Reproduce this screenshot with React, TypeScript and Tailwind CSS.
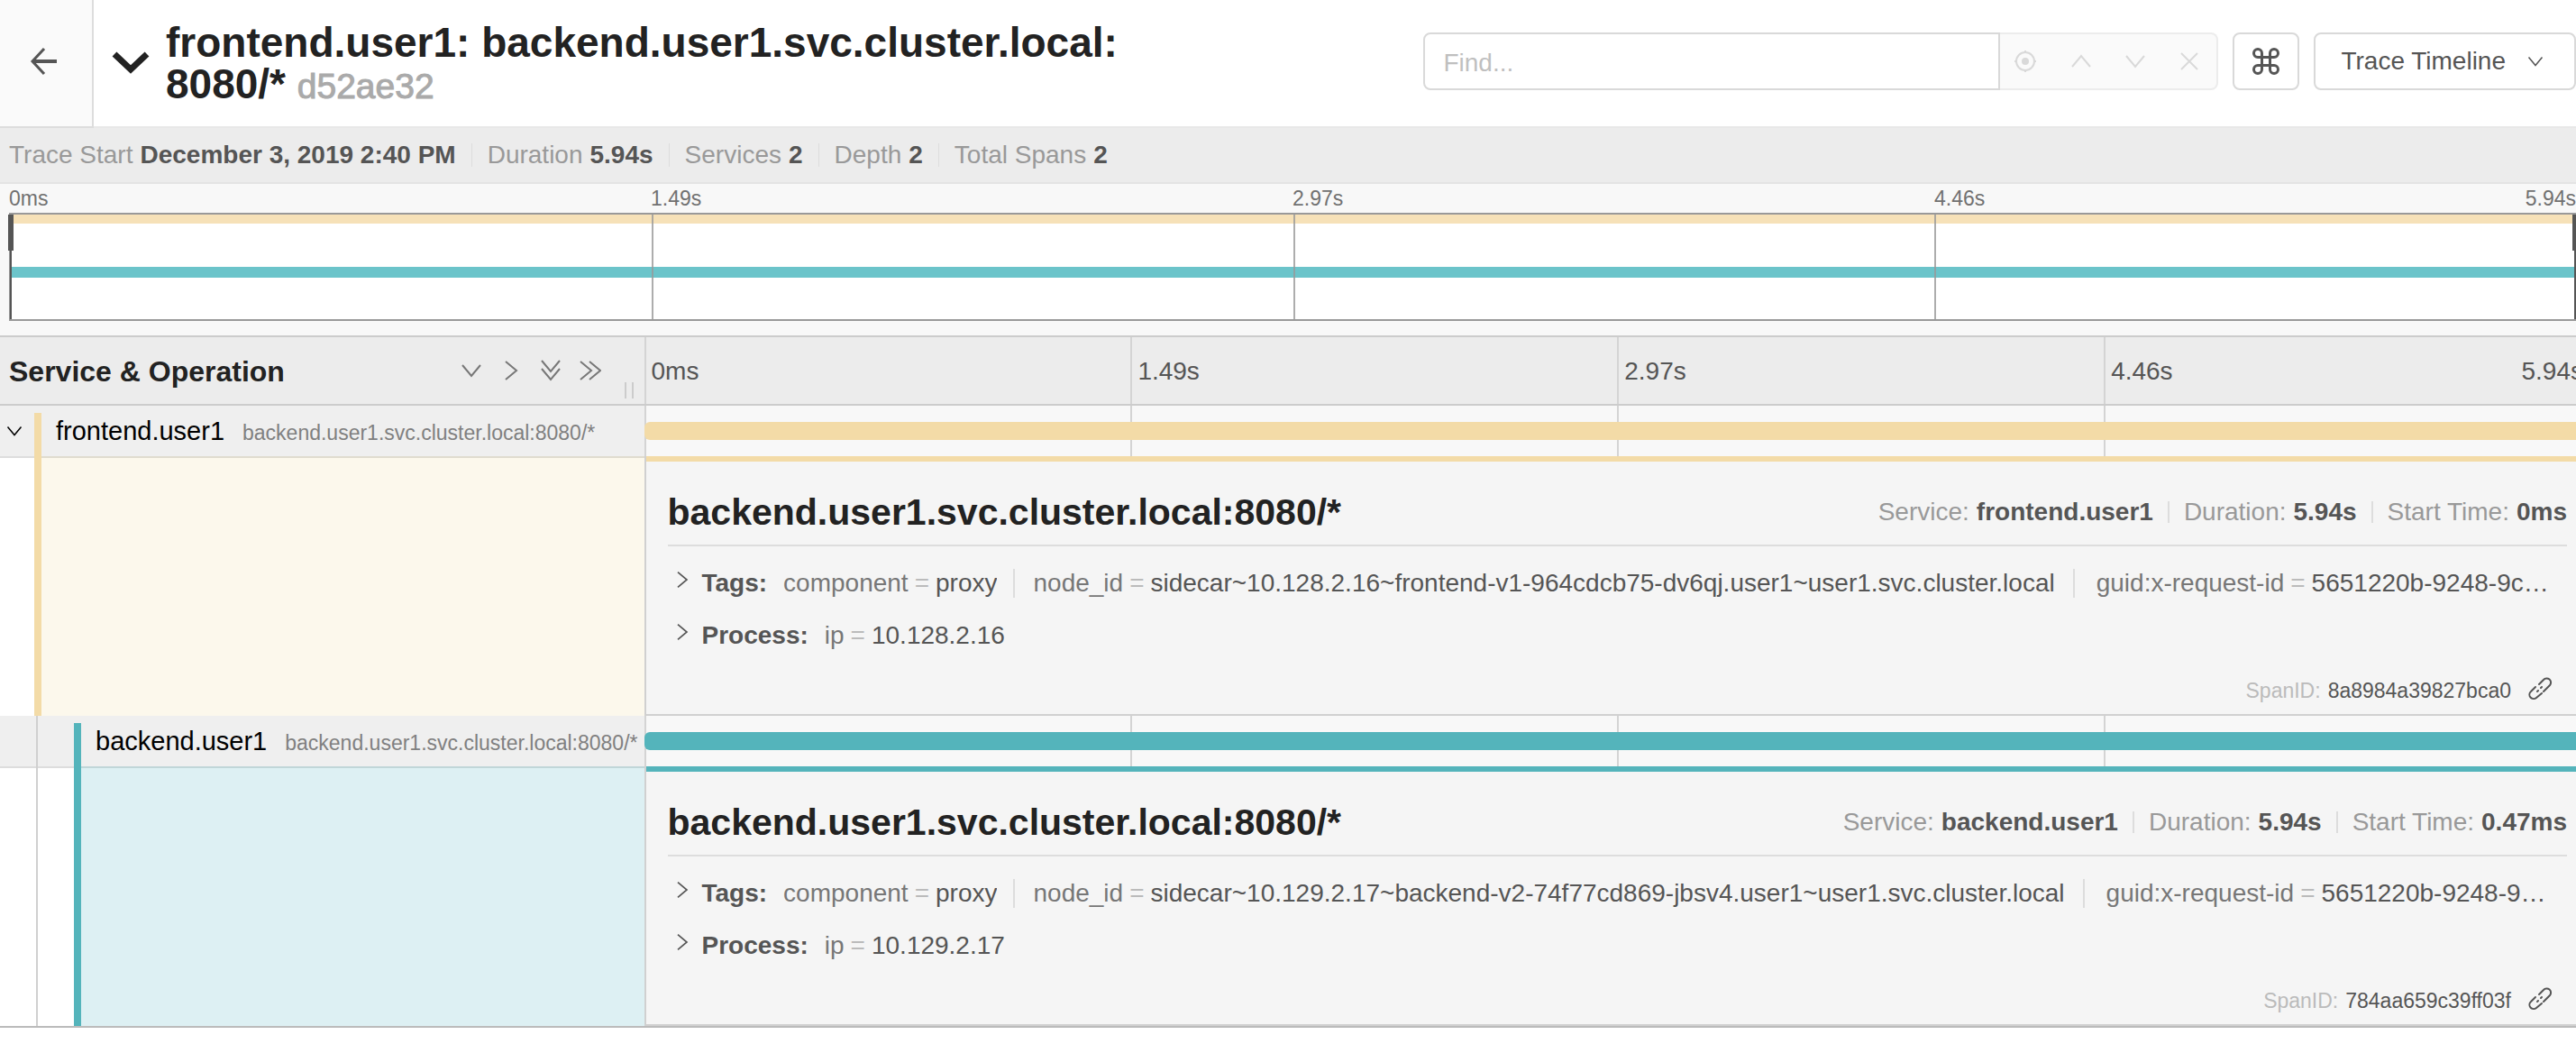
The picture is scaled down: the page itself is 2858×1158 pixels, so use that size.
import type { ReactNode } from "react";
import { Command } from "lucide-react";

type Tag = { name: string; value: string };

type Span = {
  service: string;
  operation: string;
  start: string;
  duration: string;
  id: string;
  tags: Tag[];
  process: Tag[];
  nested: boolean;
  bar: string;
  tint: string;
  tintLine: string;
  accent: string;
};

const TICKS = ["0ms", "1.49s", "2.97s", "4.46s"];

const SUMMARY = [
  ["Trace Start", "December 3, 2019 2:40 PM"],
  ["Duration", "5.94s"],
  ["Services", "2"],
  ["Depth", "2"],
  ["Total Spans", "2"],
];

const SPANS: Span[] = [
  {
    service: "frontend.user1",
    operation: "backend.user1.svc.cluster.local:8080/*",
    start: "0ms",
    duration: "5.94s",
    id: "8a8984a39827bca0",
    tags: [
      { name: "component", value: "proxy" },
      {
        name: "node_id",
        value: "sidecar~10.128.2.16~frontend-v1-964cdcb75-dv6qj.user1~user1.svc.cluster.local",
      },
      { name: "guid:x-request-id", value: "5651220b-9248-9c…" },
    ],
    process: [{ name: "ip", value: "10.128.2.16" }],
    nested: false,
    bar: "bg-[#f3dba7]",
    tint: "bg-[#fcf8ec]",
    tintLine: "border-t-[#e0dccf]",
    accent: "border-t-[#f3dba7]",
  },
  {
    service: "backend.user1",
    operation: "backend.user1.svc.cluster.local:8080/*",
    start: "0.47ms",
    duration: "5.94s",
    id: "784aa659c39ff03f",
    tags: [
      { name: "component", value: "proxy" },
      {
        name: "node_id",
        value: "sidecar~10.129.2.17~backend-v2-74f77cd869-jbsv4.user1~user1.svc.cluster.local",
      },
      { name: "guid:x-request-id", value: "5651220b-9248-9…" },
    ],
    process: [{ name: "ip", value: "10.129.2.17" }],
    nested: true,
    bar: "bg-[#54b4bb]",
    tint: "bg-[#ddf0f3]",
    tintLine: "border-t-[#c0d6d8]",
    accent: "border-t-[#54b4bb]",
  },
];

function Glyph({ d, size = 24, width = 2 }: { d: string; size?: number; width?: number }) {
  return (
    <svg
      width={size}
      height={size}
      viewBox="0 0 24 24"
      fill="none"
      stroke="currentColor"
      strokeWidth={width}
      aria-hidden="true"
      className="block shrink-0"
    >
      <path d={d} />
    </svg>
  );
}

const DOWN = "M2 6 12 18 22 6";
const UP = "M2 18 12 6 22 18";
const RIGHT = "M6 2 18 12 6 22";

function IconButton({ label, children }: { label: string; children: ReactNode }) {
  return (
    <button type="button" aria-label={label} className="flex h-11 w-11 items-center justify-center">
      {children}
    </button>
  );
}

function Header() {
  return (
    <header className="flex border-b-2 border-[#e8e8e8] bg-white">
      <a
        href="#search"
        aria-label="Back"
        className="-mb-0.5 flex w-[104px] shrink-0 items-center justify-center border-r-2 border-b-2 border-[#ddd] bg-[#fafafa] pr-1.5 pb-1 text-[#555]"
      >
        <svg width="32" height="32" viewBox="0 0 32 32" fill="none" stroke="currentColor" aria-hidden="true">
          <path d="M17 2 4 16 17 30" strokeWidth="3" />
          <path d="M4 16H31" strokeWidth="4" />
        </svg>
      </a>
      <div className="flex min-w-0 flex-1 items-start pt-6 pb-6">
        <button type="button" aria-label="Collapse header" className="mt-8 ml-5 shrink-0 text-[#222]">
          <svg width="42" height="28" viewBox="0 0 42 28" fill="none" stroke="currentColor" aria-hidden="true">
            <path d="M3 4 21 21 39 4" strokeWidth="7" />
          </svg>
        </button>
        <h1 className="ml-[18px] max-w-[1120px] text-[46px]/[46px] font-bold text-[#222]">
          frontend.user1: backend.user1.svc.cluster.local:
          <wbr />
          8080/*{" "}
          <small className="text-[39px]/8 font-normal text-[#aaa] [-webkit-text-stroke:1px]">d52ae32</small>
        </h1>
      </div>
      <div className="flex shrink-0 items-start pt-9 text-[28px] text-[#555]">
        <div className="flex h-16">
          <input
            type="text"
            aria-label="Find"
            placeholder="Find..."
            className="w-[640px] rounded-l-lg border-2 border-[#d9d9d9] bg-white px-5 pt-1 placeholder:text-[#bfbfbf]"
          />
          <div className="flex items-center rounded-r-lg border-2 border-l-0 border-[#ececec] bg-[#fafafa] text-[#d9d9d9]">
            <button type="button" disabled aria-label="Focus matches" className="flex w-[60px] justify-center pr-1">
              <svg width="26" height="26" viewBox="0 0 26 26" fill="none" stroke="currentColor" strokeWidth="2" aria-hidden="true">
                <circle cx="13" cy="13" r="10" />
                <circle cx="13" cy="13" r="4" fill="currentColor" stroke="none" />
                <path d="M13 1V4M13 22V25M1 13H4M22 13H25" />
              </svg>
            </button>
            <button type="button" disabled aria-label="Previous match" className="flex w-[60px] justify-center">
              <Glyph d={UP} />
            </button>
            <button type="button" disabled aria-label="Next match" className="flex w-[60px] justify-center">
              <Glyph d={DOWN} />
            </button>
            <button type="button" disabled aria-label="Clear search" className="flex w-[60px] justify-center">
              <Glyph d="M3 3 21 21M21 3 3 21" />
            </button>
          </div>
        </div>
        <button
          type="button"
          aria-label="Keyboard shortcuts"
          className="ml-4 flex h-16 w-[74px] items-center justify-center rounded-lg border-2 border-[#d9d9d9]"
        >
          <Command size={36} strokeWidth={2} />
        </button>
        <button
          type="button"
          className="ml-4 flex h-16 items-center gap-6 rounded-lg border-2 border-[#d9d9d9] pr-[34px] pl-7"
        >
          Trace Timeline
          <Glyph d={DOWN} size={18} />
        </button>
      </div>
    </header>
  );
}

function Summary() {
  return (
    <dl className="flex h-[62px] items-center border-b-2 border-[#e4e4e4] bg-[#ececec] pl-2.5 text-[28px]/8">
      {SUMMARY.map(([label, value], i) => (
        <div key={label} className="flex items-center">
          {i > 0 && <span className="mx-[17px] h-[26px] w-px bg-[#ddd]" />}
          <dt className="text-[#999]">{label}</dt>
          <dd className="ml-2 font-bold text-[#555]">{value}</dd>
        </div>
      ))}
    </dl>
  );
}

function Minimap() {
  return (
    <section aria-label="Trace overview" className="bg-[#f8f8f8] pb-4 pl-2.5">
      <div className="relative grid h-8 grid-cols-4 text-[23px]/8 text-[#717171]">
        {TICKS.map((t) => (
          <span key={t}>{t}</span>
        ))}
        <span className="absolute right-0">5.94s</span>
      </div>
      <div className="relative h-[120px] border-y-2 border-l border-[#999] bg-white">
        <div className="h-2.5 bg-[#f6e1b8]" />
        <div className="mt-12 h-3 bg-[#6bc4ca]" />
        <div className="absolute inset-0 grid grid-cols-4">
          {TICKS.map((t, i) => (
            <span key={t} className={i > 0 ? "border-l-2 border-[#999]/80" : ""} />
          ))}
        </div>
        <span className="absolute inset-y-0 left-0 w-0.5 bg-[#555]" />
        <span className="absolute top-0 -left-0.5 h-10 w-1.5 bg-[#555]" />
        <span className="absolute inset-y-0 right-0 w-0.5 bg-[#555]" />
        <span className="absolute top-0 right-0 h-10 w-1 bg-[#555]" />
      </div>
    </section>
  );
}

function TimelineHeader() {
  return (
    <div className="grid h-[78px] grid-cols-[25%_75%] overflow-hidden border-y-2 border-[#ccc] bg-[#ececec]">
      <div className="flex items-center pl-2.5">
        <h2 className="flex-1 pt-0.5 text-[32px] font-bold text-[#222]">Service &amp; Operation</h2>
        <div className="flex text-[#777]">
          <IconButton label="Collapse one level">
            <Glyph d={DOWN} />
          </IconButton>
          <IconButton label="Expand one level">
            <Glyph d={RIGHT} />
          </IconButton>
          <IconButton label="Collapse all">
            <Glyph d="M2 1 12 13 22 1M2 10 12 22 22 10" />
          </IconButton>
          <IconButton label="Expand all">
            <Glyph d="M1 2 13 12 1 22M11 2 23 12 11 22" />
          </IconButton>
        </div>
        <span className="mt-[43px] mr-3 ml-4 h-[18px] w-2.5 shrink-0 border-x-2 border-[#ccc]" />
      </div>
      <div className="relative -mr-4 grid grid-cols-4 text-[28px] text-[#555]">
        {TICKS.map((t) => (
          <span key={t} className="flex items-center border-l-2 border-[#d4d4d4] pt-0.5 pl-1.5">
            {t}
          </span>
        ))}
        <span className="absolute inset-y-0 right-2 flex items-center pt-0.5">5.94s</span>
      </div>
    </div>
  );
}

function SpanRow({ span }: { span: Span }) {
  return (
    <div className="grid h-14 grid-cols-[25%_75%] overflow-hidden">
      <div className="flex items-stretch bg-[#efefef]">
        {span.nested ? (
          <span className="ml-10 w-[42px] shrink-0 border-l-2 border-[#d0d0d0]" />
        ) : (
          <button type="button" aria-label="Collapse span" className="flex w-[38px] shrink-0 items-center pl-[7px]">
            <Glyph d={DOWN} size={18} />
          </button>
        )}
        <span className={`mt-2 w-2 shrink-0 ${span.bar}`} />
        <a href={`#${span.id}`} className="flex min-w-0 items-baseline pt-2.5 pl-4 text-[29px]/9 whitespace-nowrap">
          {span.service}
          <small className="ml-5 text-[23px] text-[#808080]">{span.operation}</small>
        </a>
      </div>
      <div className="relative -mr-4 grid grid-cols-4 bg-[#f8f8f8]">
        {TICKS.map((t) => (
          <span key={t} className="border-l-2 border-[#d4d4d4]" />
        ))}
        <span className={`absolute inset-x-0 top-[18px] h-5 rounded-md ${span.bar}`} />
      </div>
    </div>
  );
}

function TagLine({ title, tags }: { title: string; tags: Tag[] }) {
  return (
    <button type="button" className="flex h-[58px] w-full min-w-0 items-center pl-1.5 text-left whitespace-nowrap">
      <span className="-mt-2 text-[#555]">
        <Glyph d={RIGHT} size={20} />
      </span>
      <strong className="ml-3 text-[#555]">{title}:</strong>
      <span className="ml-[18px] flex min-w-0 items-center">
        {tags.map((t, i) => (
          <span
            key={t.name}
            className={
              i === 0
                ? "flex shrink-0 items-center"
                : i < tags.length - 1
                  ? "ml-[18px] flex shrink-0 items-center border-l-2 border-[#ddd] pl-5"
                  : "ml-5 flex min-w-0 items-center border-l-2 border-[#ddd] pl-6"
            }
          >
            <span className="text-[#777]">{t.name}</span>
            <span className="mx-[7px] text-[#bbb]">=</span>
            <span className="min-w-0 truncate text-[#555]">{t.value}</span>
          </span>
        ))}
      </span>
    </button>
  );
}

function SpanDetail({ span }: { span: Span }) {
  const facts = [
    ["Service:", span.service],
    ["Duration:", span.duration],
    ["Start Time:", span.start],
  ];
  return (
    <div className="grid h-72 grid-cols-[25%_75%]">
      <div className="flex items-stretch bg-white">
        {span.nested ? (
          <>
            <span className="w-10 border-t-2 border-[#ddd]" />
            <span className="w-0.5 bg-[#d0d0d0]" />
            <span className="w-10 border-t-2 border-[#ddd]" />
          </>
        ) : (
          <span className="w-[38px] border-t-2 border-[#ddd]" />
        )}
        <span className={`w-2 ${span.bar}`} />
        <span className={`flex-1 border-t-2 ${span.tint} ${span.tintLine}`} />
      </div>
      <div className="flex border-l-2 border-[#d0d0d0]">
        <section
          className={`flex min-w-0 flex-1 flex-col border-t-[6px] border-b-2 border-b-[#d0d0d0] bg-[#f5f5f5] pr-2.5 pl-6 ${span.accent}`}
        >
          <div className="flex h-[94px] items-center justify-between border-b-2 border-[#ddd] pt-5">
            <h2 className="text-[41px]/[48px] font-bold text-[#222]">{span.operation}</h2>
            <dl className="flex items-center text-[28px]/8">
              {facts.map(([label, value], i) => (
                <div key={label} className="flex items-center">
                  {i > 0 && <span className="mx-4 h-6 w-0.5 bg-[#ddd]" />}
                  <dt className="text-[#999]">{label}</dt>
                  <dd className="ml-2 font-bold text-[#555]">{value}</dd>
                </div>
              ))}
            </dl>
          </div>
          <div className="mt-3 flex flex-col text-[28px]/8">
            <TagLine title="Tags" tags={span.tags} />
            <TagLine title="Process" tags={span.process} />
          </div>
          <div className="mt-auto flex h-[52px] items-center justify-end pr-4 text-[23px] text-[#555]">
            <span className="text-[#bbb]">SpanID:</span>
            <span className="ml-2">{span.id}</span>
            <a href={`#${span.id}`} aria-label="Link to span" className="ml-[18px] pb-1">
              <svg
                width="28"
                height="28"
                viewBox="0 0 28 28"
                fill="none"
                stroke="currentColor"
                strokeWidth="2"
                strokeLinecap="round"
                aria-hidden="true"
              >
                <path d="M13 9 18 4A4.5 4.5 0 0 1 25 10L18 17" />
                <path d="M9 12 4 17A4.5 4.5 0 0 0 10 24L16 19" />
                <path d="M11 17 12 16M15 13 16 12" />
              </svg>
            </a>
          </div>
        </section>
      </div>
    </div>
  );
}

export default function App() {
  return (
    <div className='min-h-screen overflow-hidden bg-white font-["Liberation_Sans",Arial,sans-serif] text-black'>
      <Header />
      <Summary />
      <Minimap />
      <main className="border-b-2 border-[#bbb]">
        <TimelineHeader />
        {SPANS.map((span) => (
          <article key={span.id}>
            <SpanRow span={span} />
            <SpanDetail span={span} />
          </article>
        ))}
      </main>
    </div>
  );
}
